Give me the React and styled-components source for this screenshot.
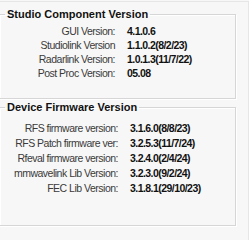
import React from 'react';
import styled, { createGlobalStyle } from 'styled-components';

const studio = [
  ['GUI Version:', '4.1.0.6'],
  ['Studiolink Version', '1.1.0.2(8/2/23)'],
  ['Radarlink Version:', '1.0.1.3(11/7/22)'],
  ['Post Proc Version:', '05.08'],
];

const firmware = [
  ['RFS firmware version:', '3.1.6.0(8/8/23)'],
  ['RFS Patch firmware ver:', '3.2.5.3(11/7/24)'],
  ['Rfeval firmware version:', '3.2.4.0(2/4/24)'],
  ['mmwavelink Lib Version:', '3.2.3.0(9/2/24)'],
  ['FEC Lib Version:', '3.1.8.1(29/10/23)'],
];

function App() {
  return (
    <>
      <GlobalStyle />
      <Panel>
        <Group height={92}>
          <Legend>Studio Component Version</Legend>
          <Rows labelWidth={115} rowHeight={14} top={3}>
            {studio.map(([label, value]) => (
              <React.Fragment key={label}>
                <Label>{label}</Label>
                <Value>{value}</Value>
              </React.Fragment>
            ))}
          </Rows>
        </Group>
        <Group height={126} second>
          <Legend>Device Firmware Version</Legend>
          <Rows labelWidth={118} rowHeight={15} top={6}>
            {firmware.map(([label, value]) => (
              <React.Fragment key={label}>
                <Label>{label}</Label>
                <Value>{value}</Value>
              </React.Fragment>
            ))}
          </Rows>
        </Group>
      </Panel>
    </>
  );
}

const GlobalStyle = createGlobalStyle`
  html, body {
    margin: 0;
    padding: 0;
    background: #f7f7f7;
  }
  body {
    width: 249px;
    height: 240px;
    overflow: hidden;
    font-family: "Liberation Sans", Arial, sans-serif;
  }
`;

const Panel = styled.div`
  margin-top: 1px;
  height: 239px;
  box-sizing: border-box;
  border-top: 1px solid #e6e6e6;
  border-right: 1px solid #e6e6e6;
  padding-top: 5px;
`;

const Group = styled.fieldset`
  margin: ${(p) => (p.second ? '1px' : '0')} 0 0 -1px;
  padding: 0;
  width: 237px;
  height: ${(p) => p.height}px;
  box-sizing: border-box;
  border: 1px solid #d6d6d6;
  box-shadow: 1px 1px 0 #ffffff, inset 1px 1px 0 #ffffff;
  background: #f7f7f7;
`;

const Legend = styled.legend`
  margin-left: 5px;
  padding: 0 2px 0 2px;
  font-size: 11px;
  font-weight: bold;
  color: #111;
  line-height: 14px;
`;

const Rows = styled.div`
  display: grid;
  grid-template-columns: ${(p) => p.labelWidth}px 1fr;
  grid-auto-rows: ${(p) => p.rowHeight}px;
  column-gap: 12px;
  margin-top: ${(p) => p.top}px;
  align-items: center;
`;

const Label = styled.span`
  text-align: right;
  font-size: 10.5px;
  letter-spacing: -0.5px;
  color: #3a3a3a;
  white-space: nowrap;
`;

const Value = styled.span`
  font-size: 10.5px;
  font-weight: bold;
  letter-spacing: -0.55px;
  color: #111;
  white-space: nowrap;
`;

export default App;
